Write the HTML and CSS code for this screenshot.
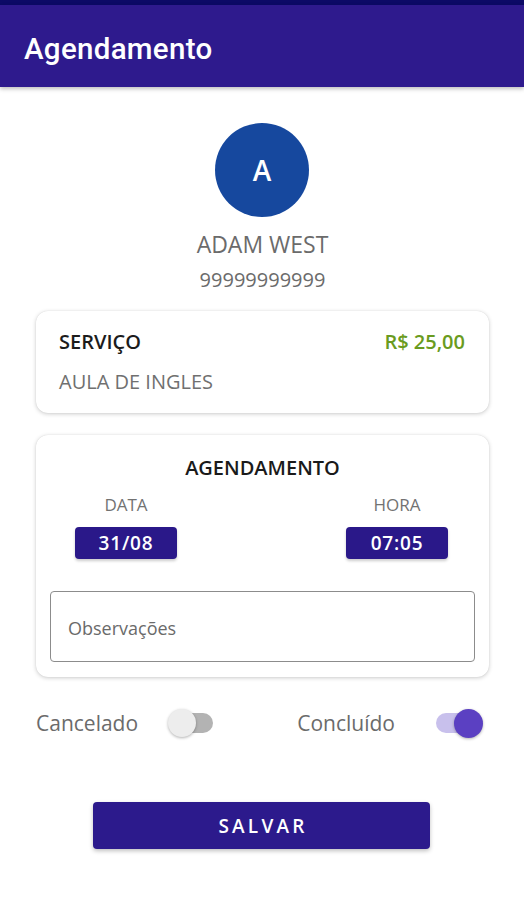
FILE: index.html
```html
<!DOCTYPE html>
<html lang="pt-BR">
<head>
<meta charset="utf-8">
<title>Agendamento</title>
<link rel="stylesheet" href="styles.css">
</head>
<body>
<div class="statusbar"></div>
<header class="appbar"><h1 class="appbar-title">Agendamento</h1></header>
<main class="content">
  <div class="profile">
    <div class="avatar">A</div>
    <div class="name">ADAM WEST</div>
    <div class="phone">99999999999</div>
  </div>

  <section class="card service">
    <div class="service-row">
      <span class="service-label">SERVIÇO</span>
      <span class="price">R$ 25,00</span>
    </div>
    <div class="service-name">AULA DE INGLES</div>
  </section>

  <section class="card schedule">
    <div class="schedule-title">AGENDAMENTO</div>
    <div class="datetime">
      <div class="dt-col">
        <span class="dt-label">DATA</span>
        <span class="dt-btn">31/08</span>
      </div>
      <div class="dt-col">
        <span class="dt-label">HORA</span>
        <span class="dt-btn">07:05</span>
      </div>
    </div>
    <div class="obs">Observações</div>
  </section>

  <div class="toggles">
    <div class="toggle-group">
      <span class="toggle-label">Cancelado</span>
      <span class="switch"><span class="track"></span><span class="thumb"></span></span>
    </div>
    <div class="toggle-group right">
      <span class="toggle-label">Concluído</span>
      <span class="switch on"><span class="track"></span><span class="thumb"></span></span>
    </div>
  </div>

  <button class="save">SALVAR</button>
</main>
</body>
</html>
```

FILE: styles.css
```css
* { box-sizing: border-box; }
html, body { margin: 0; padding: 0; background: #ffffff; }
body {
  font-family: "Open Sans", "Noto Sans", sans-serif;
  width: 524px;
  height: 900px;
  overflow: hidden;
}
.statusbar { height: 5px; background: #0c0a66; }
.appbar {
  height: 82px;
  background: #2e1a8d;
  display: flex;
  align-items: center;
  padding: 6px 0 0 24px;
  box-shadow: 0 2px 4px rgba(0,0,0,0.25);
  position: relative;
  z-index: 1;
}
.appbar-title {
  margin: 0;
  font-family: Roboto, "Liberation Sans", sans-serif;
  font-weight: 500;
  font-size: 29.5px;
  color: #ffffff;
  letter-spacing: 0.3px;
}
.content { padding: 0 35px 0 36px; }
.profile { display: flex; flex-direction: column; align-items: center; padding-top: 36px; }
.avatar {
  width: 94px; height: 94px; border-radius: 50%;
  background: #16489e; color: #fff;
  display: flex; align-items: center; justify-content: center;
  font-size: 28px; font-weight: 600;
  margin-left: -1px;
}
.name { margin-top: 12px; font-size: 23px; line-height: 30px; color: #6b6b6b; font-weight: 500; }
.phone { margin-top: 7px; font-size: 20px; line-height: 27px; color: #6b6b6b; font-weight: 500; }

.card {
  background: #fff;
  border-radius: 12px;
  box-shadow: 0 1px 4px rgba(0,0,0,0.2), 0 0 1px rgba(0,0,0,0.12);
}
.service { margin-top: 18px; padding: 19px 24px 19px 23px; }
.service-row { display: flex; justify-content: space-between; line-height: 24px; }
.service-label { font-size: 20px; font-weight: 600; color: #1c1c1c; }
.price { font-size: 20px; font-weight: 600; color: #6a9b20; }
.service-name { margin-top: 16px; line-height: 24px; font-size: 20px; color: #707070; font-weight: 500; }

.schedule { margin-top: 22px; padding: 21px 14px 15px 14px; }
.schedule-title { text-align: center; font-size: 20px; font-weight: 600; line-height: 24px; color: #1a1a1a; }
.datetime { margin-top: 14px; display: flex; justify-content: space-between; padding: 0 27px 0 25px; }
.dt-col { display: flex; flex-direction: column; align-items: center; width: 102px; }
.dt-label { font-size: 17px; line-height: 22px; color: #727272; font-weight: 500; }
.dt-btn {
  margin-top: 11px;
  width: 102px; height: 32px;
  background: #2a1889; color: #fff;
  border-radius: 4px;
  display: flex; align-items: center; justify-content: center;
  font-size: 19px; font-weight: 600; letter-spacing: 0.8px;
  box-shadow: 0 2px 3px rgba(0,0,0,0.2);
}
.obs {
  margin-top: 32px;
  height: 71px;
  border: 1.5px solid #8c8c8c;
  border-radius: 4px;
  display: flex; align-items: center;
  padding: 3px 0 0 17px;
  font-size: 18px; color: #6a6a6a; font-weight: 500;
}

.toggles { margin-top: 31px; height: 30px; display: flex; align-items: center; justify-content: space-between; padding-right: 6px; }
.toggle-group { display: flex; align-items: center; gap: 30px; }
.toggle-group.right { gap: 41px; }
.toggle-label { font-size: 21px; color: #6b6b6b; font-weight: 500; }
.switch { position: relative; width: 46px; height: 30px; display: inline-block; }
.switch .track {
  position: absolute; left: 3px; right: 1px; top: 5px; height: 20px;
  border-radius: 10px; background: #b3b3b3;
}
.switch .thumb {
  position: absolute; left: 0; top: 1px; width: 28px; height: 28px;
  border-radius: 50%; background: #ededed;
  box-shadow: 0 1px 3px rgba(0,0,0,0.3);
}
.switch.on { width: 47px; }
.switch.on .track { left: 0; right: 3px; background: #c8c0ec; }
.switch.on .thumb { left: auto; right: 0; width: 29px; height: 29px; background: #5b40c2; }

.save {
  display: block;
  margin: 64px auto 0;
  width: 337px; height: 47px;
  position: relative; left: -1px;
  border: none; border-radius: 4px;
  background: #2c1a8c; color: #fff;
  font-family: "Open Sans", "Noto Sans", sans-serif;
  font-size: 19px; font-weight: 600; letter-spacing: 3.2px;
  padding: 0 0 0 3px;
  box-shadow: 0 2px 4px rgba(0,0,0,0.25);
}
```
